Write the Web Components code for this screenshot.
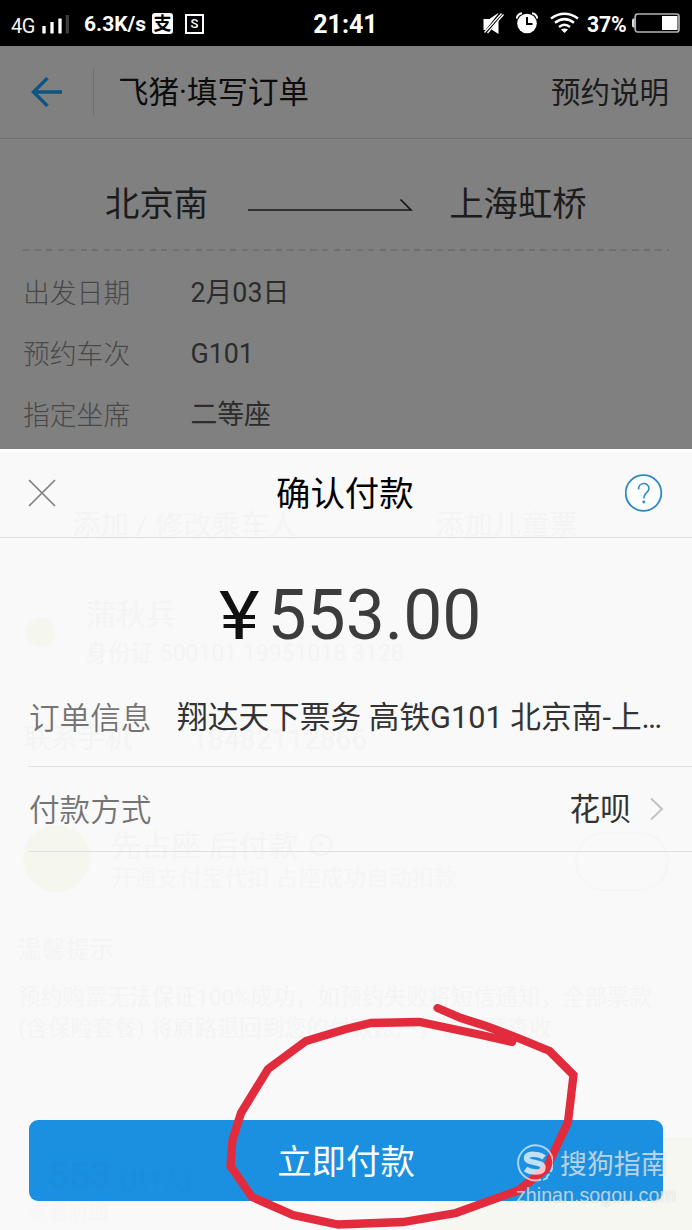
<!DOCTYPE html>
<html lang="zh-CN">
<head>
<meta charset="utf-8">
<title>确认付款</title>
<style>
html,body{margin:0;padding:0}
body{width:692px;height:1230px;overflow:hidden;background:#808080;font-family:Roboto,"Noto Sans CJK SC",sans-serif}
</style>
</head>
<body>
<pay-screen></pay-screen>
<script>
const define = (name, css, html) => customElements.define(name, class extends HTMLElement {
  constructor(){
    super();
    this.attachShadow({mode:'open'}).innerHTML = `<style>*{box-sizing:border-box}${css}</style>${html}`;
  }
});

define('status-bar', `
:host{display:flex;align-items:center;height:46px;background:#000;color:#fff;padding:0 12px 0 11px;position:relative;white-space:nowrap}
svg{display:block;flex:none}
.left,.right{display:flex;align-items:center;height:46px}
.left{flex:1}
.net{font-size:20px;width:31px;color:#f4f4f4;font-weight:400;padding-top:6px;letter-spacing:-.6px}
.speed{font-size:21px;font-weight:700;width:67px;margin-left:15px;padding-top:2px}
.ali{display:flex;align-items:center;justify-content:center;width:21px;height:21px;margin-left:1px;border-radius:3px;background:#fff;color:#000;font-size:18px;font-weight:700;line-height:27px}
.s{width:19px;height:20px;margin-left:12px;border:2.5px solid #fff;font-size:13px;font-weight:500;line-height:15px;text-align:center;margin-top:2px}
.time{position:absolute;left:3px;right:0;top:0;line-height:49px;text-align:center;font-size:25px;font-weight:700;letter-spacing:0;padding-right:4px}
.pct{font-size:21.2px;font-weight:700;margin-left:8px;width:45px;padding-top:2px;letter-spacing:-.2px}
`, `
<div class="left">
 <span class="net">4G</span>
 <svg width="27" height="46"><path d="M2 26v7.5M10 22v11.500M18 18.500v15" stroke="#fff" stroke-width="3.300"/><path d="M25.300 15v18.500" stroke="#3c3c3c" stroke-width="3.300"/></svg>
 <span class="speed">6.3K/s</span><span class="ali">支</span><span class="s">S</span>
</div>
<div class="time">21:41</div>
<div class="right">
 <svg width="22" height="46"><path d="M.5 19h6l8-5.500h1L2.500 30H.5ZM15.500 20v14l-7-4.500Z" fill="#fff"/><path d="M1.500 32.500 18.500 13.500M4.500 33 20.500 14.500" stroke="#fff" stroke-width="1.300"/></svg>
 <svg width="22" height="46" style="margin-left:11px"><circle cx="11" cy="23.500" r="9.800" fill="#fff"/><path d="M11 17v7h5.500" fill="none" stroke="#000" stroke-width="2"/><path d="M.6 18.500Q1.500 14 6 13.300M21.400 18.500Q20.500 14 16 13.300" fill="none" stroke="#fff" stroke-width="1.900"/></svg>
 <svg width="29" height="46" style="margin-left:12px"><g fill="none" stroke="#fff" stroke-width="2.500"><path d="M1 18.500Q14.500 9 28 18.500"/><path d="M5 22.800Q14.500 15.500 24 22.800"/><path d="M9 27Q14.500 22.500 20 27"/></g><path d="M11 29.500Q14.500 27.500 18 29.500L14.500 33Z" fill="#fff"/></svg>
 <span class="pct" style="width:44px">37%</span>
 <svg width="49" height="46"><rect x="4.200" y="14" width="43.800" height="18" rx="2.500" fill="none" stroke="#b4b4b4" stroke-width="1.700"/><path d="M3.500 18.500H2.500Q1 18.500 1 20.500V25.500Q1 27.500 2.500 27.500H3.500Z" fill="#ddd"/><path d="M31 16h15.500v14H31z" fill="#fff"/></svg>
</div>`);

define('nav-header', `
:host{display:flex;align-items:center;height:93px;border-bottom:1px solid #6c7272;padding:0 23px 0 31px;color:#0c0c0c;font-size:30.5px;line-height:40px;white-space:nowrap}
svg{display:block;flex:none}
i{width:1px;height:46px;background:#707070;margin:0 24px 0 30px}
.t{flex:1;padding-top:2px}
.r{font-size:29.500px;color:#1c1c1c;padding-top:1px}
`, `<svg width="32" height="32" viewBox="0 0 32 32"><path d="M16.500 2 2.500 16 16.500 30M2 16H31" fill="none" stroke="#0d567f" stroke-width="3.500"/></svg><i></i><span class="t"><slot name="title"></slot></span><span class="r"><slot name="action"></slot></span>`);

define('route-line', `
:host{display:flex;align-items:center;height:112px;margin:0 23px;padding:17px 0 0 82px;color:#1c1c1c;font-size:34.4px;line-height:44px;white-space:nowrap;background:repeating-linear-gradient(90deg,#6f6f6f 0 6px,transparent 6px 11.500px) 0 110px/100% 2px no-repeat}
svg{margin:5px 36px 0 40px;display:block}
`, `<slot name="from"></slot><svg width="165" height="20"><path d="M0 14H163L152.500 3.500" fill="none" stroke="#161616" stroke-width="1.700"/></svg><slot name="to"></slot>`);

define('info-row', `
:host{display:flex;align-items:center;height:61px;padding-left:23px;font-size:26.800px;color:#2c2c2c;white-space:nowrap;line-height:40px}
.l{width:167.500px;color:#484848;font-weight:300}
.v{padding-bottom:1px}
`, `<span class="l"><slot name="label"></slot></span><span class="v"><slot></slot></span>`);

define('ghost-text', `
:host{position:absolute;white-space:nowrap;line-height:1;color:#f4f4f4}
`, `<slot></slot>`);

define('sheet-header', `
:host{display:flex;align-items:center;height:89px;border-bottom:1px solid #dedede;border-top:3px solid #fff;padding:0 29px 3px 28px;font-size:34.400px;color:#000;position:relative}
svg{display:block;flex:none}
.t{flex:1;padding-left:220px;margin-top:-5px}
`, `<svg width="28" height="28"><path d="M1 1 27 27M27 1 1 27" stroke="#808080" stroke-width="1.700"/></svg><span class="t"><slot></slot></span><svg width="38" height="38"><circle cx="18.500" cy="19" r="17.800" fill="#fcfeff" stroke="#2f8ac4" stroke-width="1.800"/><path d="M13.500 15.500C13.500 7.500 24 8 24 14.500C24 18.500 18.800 18.500 18.800 24.500" fill="none" stroke="#2f8ac4" stroke-width="1.600"/><circle cx="18.800" cy="28" r="1.400" fill="#2f8ac4"/></svg>`);

define('pay-amount', `
:host{display:flex;align-items:baseline;height:130px;padding-left:218.500px;line-height:155px;color:#3c3c3c;font-size:69.600px;position:relative}
.y{font-size:66px;color:#111;width:49px}
.y b{display:inline-block;font-weight:400;transform:scaleX(1.17);transform-origin:0 0}
`, `<span class="y"><b>¥</b></span><slot></slot>`);

define('pay-row', `
:host{display:flex;align-items:center;margin-left:28px;padding:0 29px 0 2px;border-bottom:1px solid #e0e0e0;font-size:30.600px;color:#333;position:relative;white-space:nowrap}
.l{color:#747474;width:147px;flex:none;font-weight:350;margin:-3px 1px 0 -1px}
.v{flex:1;line-height:44px;margin-top:1px;font-size:30.700px}
:host([link]) .v{text-align:right;margin-top:3px}
:host([link]) .l{margin-top:-1px}
svg{display:none;margin-left:18px;margin-right:-1px}
:host([link]) svg{display:block}
`, `<span class="l"><slot name="label"></slot></span><span class="v"><slot></slot></span><svg width="15" height="24"><path d="M2 1.500 13 12 2 22.500" fill="none" stroke="#c2c2c2" stroke-width="2"/></svg>`);

define('pay-button', `
:host{display:flex;align-items:center;justify-content:center;height:81px;margin:268px 29px 0;padding-bottom:4px;border-radius:9px;background:#1b90e0;color:#fff;font-size:34.400px;position:relative}
.g{position:absolute;left:19px;top:37px;font-size:37px;line-height:1;color:#1a8ddb;font-weight:500}
.g small{font-size:22px;font-weight:400}
`, `<span class="g">553 <small>(共1人)</small></span><slot></slot>`);

define('site-mark', `
:host{position:absolute;left:516px;top:1142px;width:176px;color:rgba(255,255,255,.64);text-shadow:0 0 2px rgba(120,130,140,.35);white-space:nowrap}
.a{display:flex;align-items:center;height:41px;font-size:26.900px}
svg{display:block;margin:0 7px 0 -1px}
.u{font:19.700px/24px "Liberation Sans",sans-serif;margin-top:0}
`, `<div class="a"><svg width="38" height="40"><path d="M35.500 29A17.500 17.500 0 1 0 26 36.500M34.500 31Q31.500 32.500 32 35L28 37" fill="none" stroke="rgba(255,255,255,.65)" stroke-width="1.900"/><path d="M29 14.500C25 11 11.500 9.500 11.500 15C11.500 21 28 18 28 24.500C28 31 15 29.500 10.500 26" fill="none" stroke="rgba(255,255,255,.72)" stroke-width="5.500"/></svg><span><slot></slot></span></div><div class="u"><slot name="url"></slot></div>`);

define('red-mark', `:host{position:absolute;left:0;top:0;width:692px;height:1230px}svg{display:block}`,
`<svg width="692" height="1230"><path d="M437.500 1008 461 1018 486 1026 518 1038 549.500 1051 573.500 1075 568 1122 546 1169 518 1190.500 456 1213 403 1222 338 1224.500 293 1215 252 1197 230.500 1166 232.500 1140 241 1113 268 1069 306 1041 346 1029 371 1023 419.500 1022 479 1034.500 512 1042" fill="none" stroke="#e22b3c" stroke-width="8.300" stroke-linejoin="miter" stroke-linecap="round"/></svg>`);

define('pay-sheet', `
:host{display:block;position:absolute;left:0;top:449px;width:692px;height:781px;background:#f9f9f9}
.dot{position:absolute;border-radius:50%;background:#f5f7ef}
.toggle{position:absolute;left:575px;top:383px;width:94px;height:59px;border:2px solid #f6f6f6;border-radius:30px}
.panel{position:absolute;left:435px;top:688px;width:257px;height:93px;background:#f7f7f2}
.o{height:99px}.m{height:85px;padding-bottom:1px}
`, `
<div class="panel"></div><div class="toggle"></div>
<div class="dot" style="left:26px;top:169px;width:29px;height:29px"></div>
<div class="dot" style="left:23px;top:376px;width:67px;height:67px"></div>
<ghost-text style="left:72px;top:63px;font-size:28.500px">添加 / 修改乘车人</ghost-text>
<ghost-text style="left:436px;top:63px;font-size:28.400px">添加儿童票</ghost-text>
<ghost-text style="left:86px;top:151px;font-size:30px">蒲秋兵</ghost-text>
<ghost-text style="left:85px;top:193px;font-size:23px">身份证 500101 19951018 3128</ghost-text>
<ghost-text style="left:24px;top:277px;font-size:27px">联系手机</ghost-text>
<ghost-text style="left:192px;top:277px;font-size:28.400px">18482112866</ghost-text>
<ghost-text style="left:111px;top:382px;font-size:30px">先占座 后付款 ⊙</ghost-text>
<ghost-text style="left:111px;top:419px;font-size:22.700px;color:#f5f5f5">开通支付宝代扣 占座成功自动扣款</ghost-text>
<ghost-text style="left:18px;top:489px;font-size:24px">温馨提示</ghost-text>
<ghost-text style="left:18px;top:537px;font-size:22.300px">预约购票无法保证100%成功，如预约失败将短信通知，全部票款</ghost-text>
<ghost-text style="left:18px;top:568px;font-size:22.300px">(含保险套餐) 将原路退回到您的付款账户，请注意查收</ghost-text>
<ghost-text style="left:28px;top:754px;font-size:20px;color:#f6f6f6">查看明细</ghost-text>
<sheet-header>确认付款</sheet-header>
<pay-amount>553.00</pay-amount>
<pay-row class="o"><span slot="label">订单信息</span>翔达天下票务 高铁G101 北京南-上…</pay-row>
<pay-row class="m" link><span slot="label">付款方式</span>花呗</pay-row>
<pay-button>立即付款</pay-button>`);

define('pay-screen', `:host{display:block;position:relative;width:692px;height:1230px;overflow:hidden;background:#808080}
.list{padding-top:12px}`, `
<status-bar></status-bar>
<nav-header><span slot="title">飞猪·填写订单</span><span slot="action">预约说明</span></nav-header>
<route-line><span slot="from">北京南</span><span slot="to">上海虹桥</span></route-line>
<div class="list">
<info-row><span slot="label">出发日期</span>2月03日</info-row>
<info-row><span slot="label">预约车次</span>G101</info-row>
<info-row><span slot="label">指定坐席</span>二等座</info-row>
</div>
<pay-sheet></pay-sheet>
<red-mark></red-mark>
<site-mark>搜狗指南<span slot="url">zhinan.sogou.com</span></site-mark>`);
</script>
</body>
</html>
